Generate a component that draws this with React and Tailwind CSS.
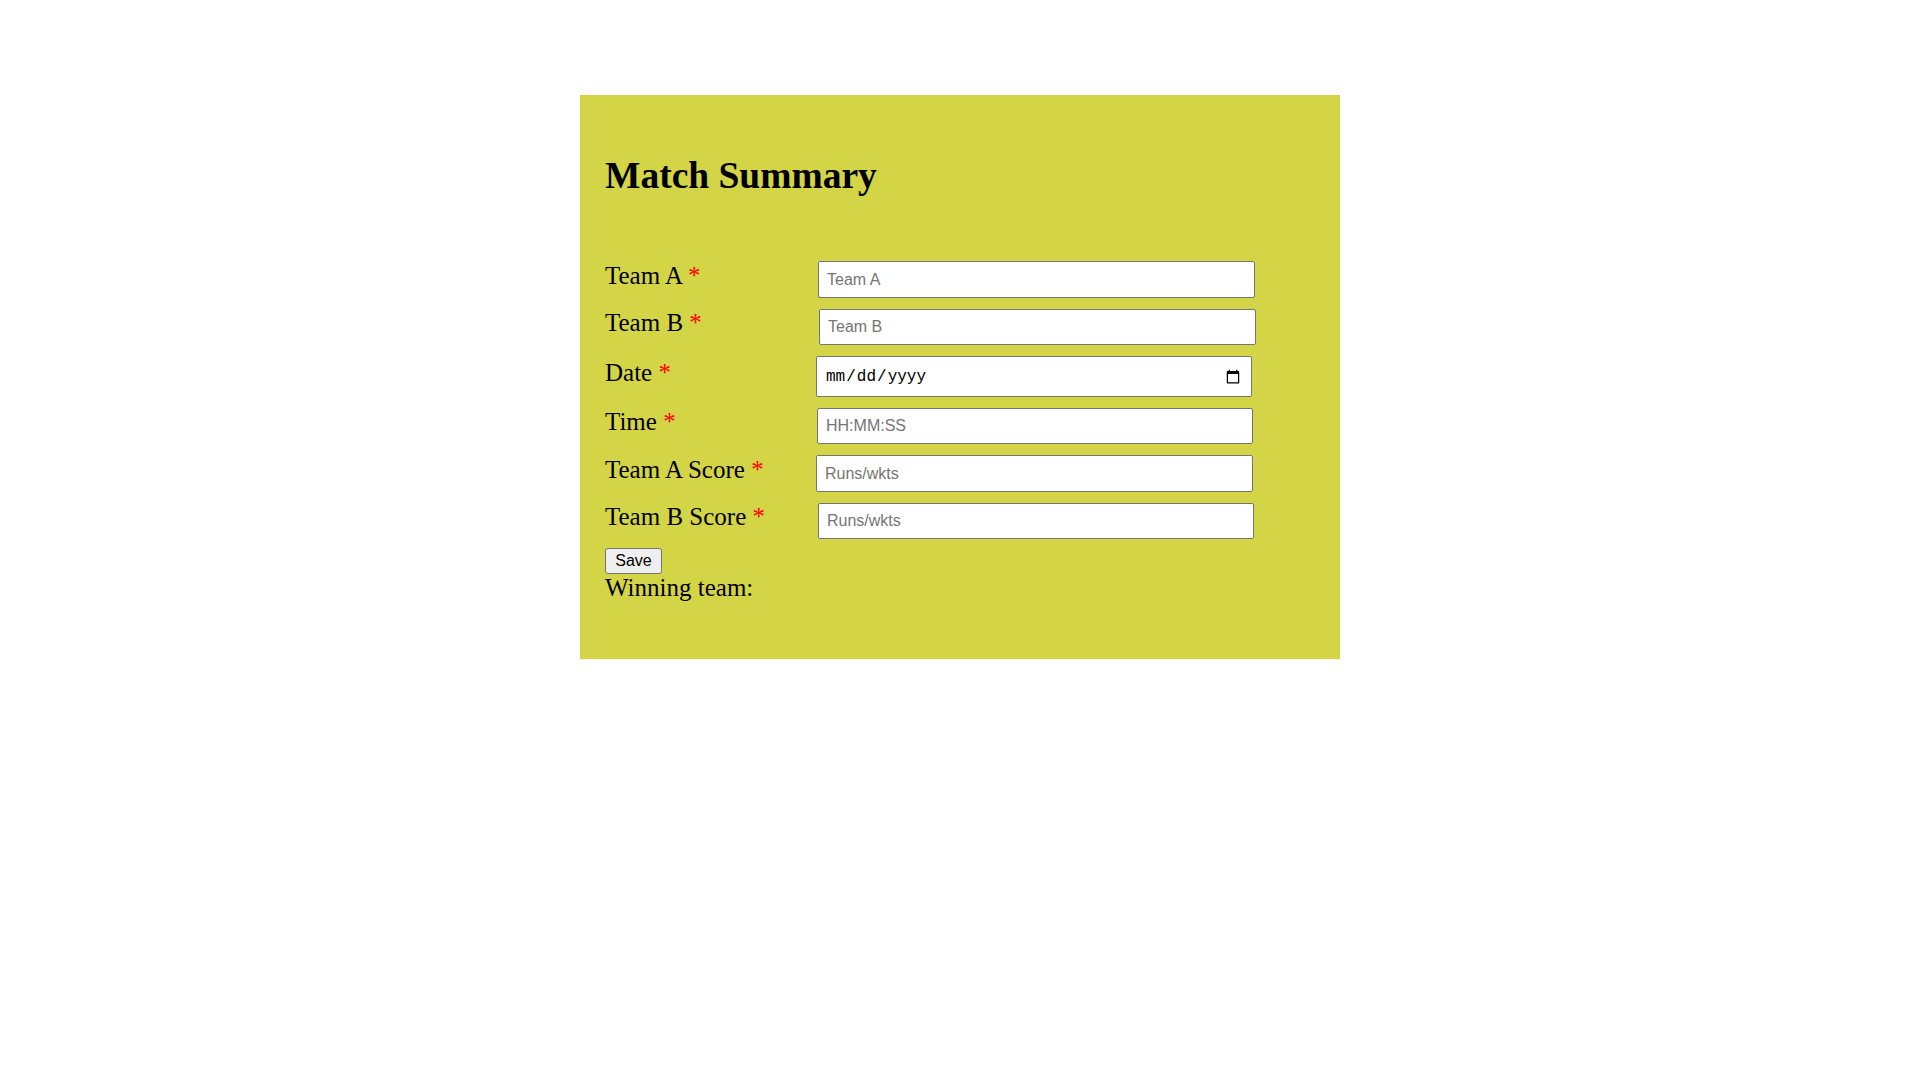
import React, { useState } from "react";

const fields = [
  { label: "Team A", name: "teamA", placeholder: "Team A", ml: "ml-[2px]", w: "w-[437px]", h: "h-[37px]" },
  { label: "Team B", name: "teamB", placeholder: "Team B", ml: "ml-[3px]", w: "w-[437px]", h: "h-[36px]" },
  { label: "Date", name: "date", type: "date", ml: "ml-0", w: "w-[436px]", h: "h-[41px]" },
  { label: "Time", name: "time", placeholder: "HH:MM:SS", ml: "ml-[1px]", w: "w-[436px]", h: "h-[36px]" },
  { label: "Team A Score", name: "scoreA", placeholder: "Runs/wkts", ml: "ml-0", w: "w-[437px]", h: "h-[37px]" },
  { label: "Team B Score", name: "scoreB", placeholder: "Runs/wkts", ml: "ml-[2px]", w: "w-[436px]", h: "h-[36px]" },
];

const App = () => {
  const [form, setForm] = useState({});
  const [winner, setWinner] = useState("");

  const onChange = (e) => setForm({ ...form, [e.target.name]: e.target.value });

  // whoever has more runs wins
  const onSave = () => {
    const a = parseInt(form.scoreA) || 0;
    const b = parseInt(form.scoreB) || 0;
    if (a === b) setWinner("");
    else setWinner(a > b ? form.teamA : form.teamB);
  };

  return (
    <div className="min-h-screen bg-white pt-[95px] font-['Liberation_Serif',serif] text-black">
      <div className="mx-auto w-[760px] bg-[#d4d447] pl-[25px] pr-[26px] pt-[59px] pb-[57px]">
        <h1 className="text-[37.5px] font-bold leading-[44px]">Match Summary</h1>

        <div className="mt-[63px] flex flex-col gap-[11px]">
          {fields.map((f) => (
            <Field key={f.name} {...f} value={form[f.name] || ""} onChange={onChange} />
          ))}
        </div>

        <button
          onClick={onSave}
          className="mt-[9px] block h-[26px] w-[57px] rounded-[3px] border border-[#767676] bg-[#efefef] font-['Liberation_Sans',Arial,sans-serif] text-base leading-none text-black"
        >
          Save
        </button>
        <p className="text-[25px] leading-[28px]">Winning team: {winner}</p>
      </div>
    </div>
  );
};

export default App;

const Field = ({ label, name, type = "text", placeholder, ml, w, h, value, onChange }) => (
  <div className="flex items-center">
    <label htmlFor={name} className="mb-2 w-[211px] shrink-0 text-[25px] leading-[28px]">
      {label} <span className="text-[#ff0000]">*</span>
    </label>
    <input
      id={name}
      name={name}
      type={type}
      placeholder={placeholder}
      value={value}
      onChange={onChange}
      className={`${ml} ${w} ${h} rounded-[2px] border border-[#767676] bg-white px-[8px] text-base text-black placeholder:text-[#757575] ${
        type === "date"
          ? "font-['Liberation_Mono',monospace]"
          : "font-['Liberation_Sans',Arial,sans-serif]"
      }`}
    />
  </div>
);
